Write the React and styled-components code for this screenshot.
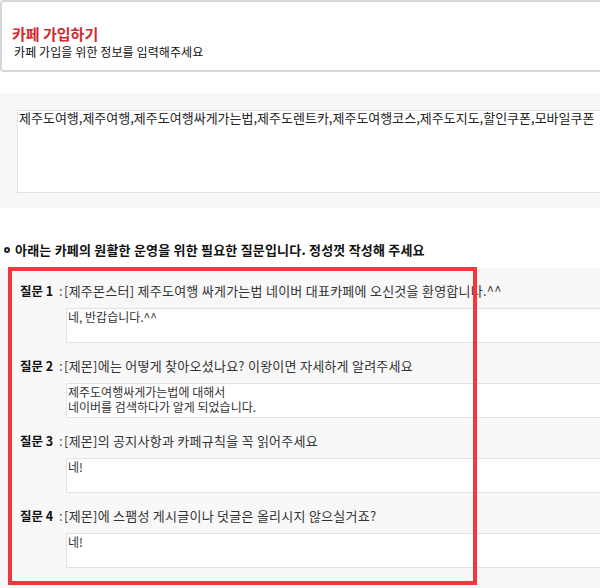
import React from 'react';
import styled, { createGlobalStyle } from 'styled-components';

const GlobalStyle = createGlobalStyle`
  html, body {
    margin: 0;
    padding: 0;
    background: #fff;
    overflow: hidden;
  }
  body {
    font-family: "Noto Sans CJK KR", "Noto Sans", sans-serif;
    font-size: 12px;
    color: #222;
  }
`;

const Page = styled.div`
  position: relative;
  width: 640px;
  height: 588px;
`;

const Header = styled.div`
  box-sizing: border-box;
  height: 72px;
  border: 2px solid #d6d6d6;
  border-radius: 4px;
  padding: 23px 0 0 10px;
`;

const Title = styled.h1`
  margin: 0;
  font-size: 15px;
  line-height: 18px;
  font-weight: bold;
  color: #d02a2e;
`;

const Subtitle = styled.p`
  margin: 1px 0 0 2px;
  font-size: 12px;
  line-height: 16px;
  color: #111;
  letter-spacing: 0.1px;
`;

const KeywordSection = styled.div`
  box-sizing: border-box;
  height: 115px;
  margin-top: 21px;
  background: #f7f7f7;
  padding: 17px 0 0 17px;
`;

const KeywordBox = styled.div`
  box-sizing: border-box;
  height: 83px;
  background: #fff;
  border: 1px solid #e2e2e2;
  padding: 0 1px;
  font-size: 13px;
  line-height: 14px;
  color: #222;
  white-space: nowrap;
`;

const Heading = styled.h2`
  display: flex;
  align-items: center;
  gap: 5px;
  margin: 34px 0 0 4px;
  font-size: 13px;
  line-height: 16px;
  font-weight: bold;
  letter-spacing: 0.2px;
  color: #111;
`;

const Bullet = styled.span`
  box-sizing: border-box;
  width: 6px;
  height: 6px;
  border: 2px solid #222;
  border-radius: 50%;
`;

const QuestionList = styled.div`
  margin-top: 10px;
  background: #f8f8f8;
  padding-bottom: 20px;
`;

const QuestionRow = styled.div`
  box-sizing: border-box;
  display: flex;
  align-items: center;
  height: 40px;
  padding: 4px 0 0 20px;
  font-size: 13px;
  letter-spacing: 0.25px;
  white-space: nowrap;
  color: #333;
`;

const Label = styled.b`
  width: 39px;
  font-size: 12.5px;
  letter-spacing: 0;
  color: #111;
`;

const Colon = styled.span`
  width: 5px;
  color: #555;
`;

const Answer = styled.div`
  box-sizing: border-box;
  height: 35px;
  margin-left: 66px;
  background: #fff;
  border: 1px solid #e2e2e2;
  padding: 0 0 0 1px;
  line-height: 15px;
  letter-spacing: 0;
  color: #333;
  white-space: pre-line;
`;

const Highlight = styled.div`
  position: absolute;
  box-sizing: border-box;
  left: 8px;
  top: 267px;
  width: 469px;
  height: 318px;
  border: 4px solid #f2383c;
  pointer-events: none;
`;

const questions = [
  {
    q: '[제주몬스터] 제주도여행 싸게가는법 네이버 대표카페에 오신것을 환영합니다.^^',
    a: '네, 반갑습니다.^^',
  },
  {
    q: '[제몬]에는 어떻게 찾아오셨나요? 이왕이면 자세하게 알려주세요',
    a: '제주도여행싸게가는법에 대해서\n네이버를 검색하다가 알게 되었습니다.',
  },
  { q: '[제몬]의 공지사항과 카페규칙을 꼭 읽어주세요', a: '네!' },
  { q: '[제몬]에 스팸성 게시글이나 덧글은 올리시지 않으실거죠?', a: '네!' },
];

export default function App() {
  return (
    <Page>
      <GlobalStyle />
      <Header>
        <Title>카페 가입하기</Title>
        <Subtitle>카페 가입을 위한 정보를 입력해주세요</Subtitle>
      </Header>

      <KeywordSection>
        <KeywordBox>
          제주도여행,제주여행,제주도여행싸게가는법,제주도렌트카,제주도여행코스,제주도지도,할인쿠폰,모바일쿠폰
        </KeywordBox>
      </KeywordSection>

      <Heading>
        <Bullet />
        아래는 카페의 원활한 운영을 위한 필요한 질문입니다. 정성껏 작성해 주세요
      </Heading>

      <QuestionList>
        {questions.map((item, i) => (
          <React.Fragment key={i}>
            <QuestionRow>
              <Label>질문 {i + 1}</Label>
              <Colon>:</Colon>
              {item.q}
            </QuestionRow>
            <Answer>{item.a}</Answer>
          </React.Fragment>
        ))}
      </QuestionList>

      <Highlight />
    </Page>
  );
}
